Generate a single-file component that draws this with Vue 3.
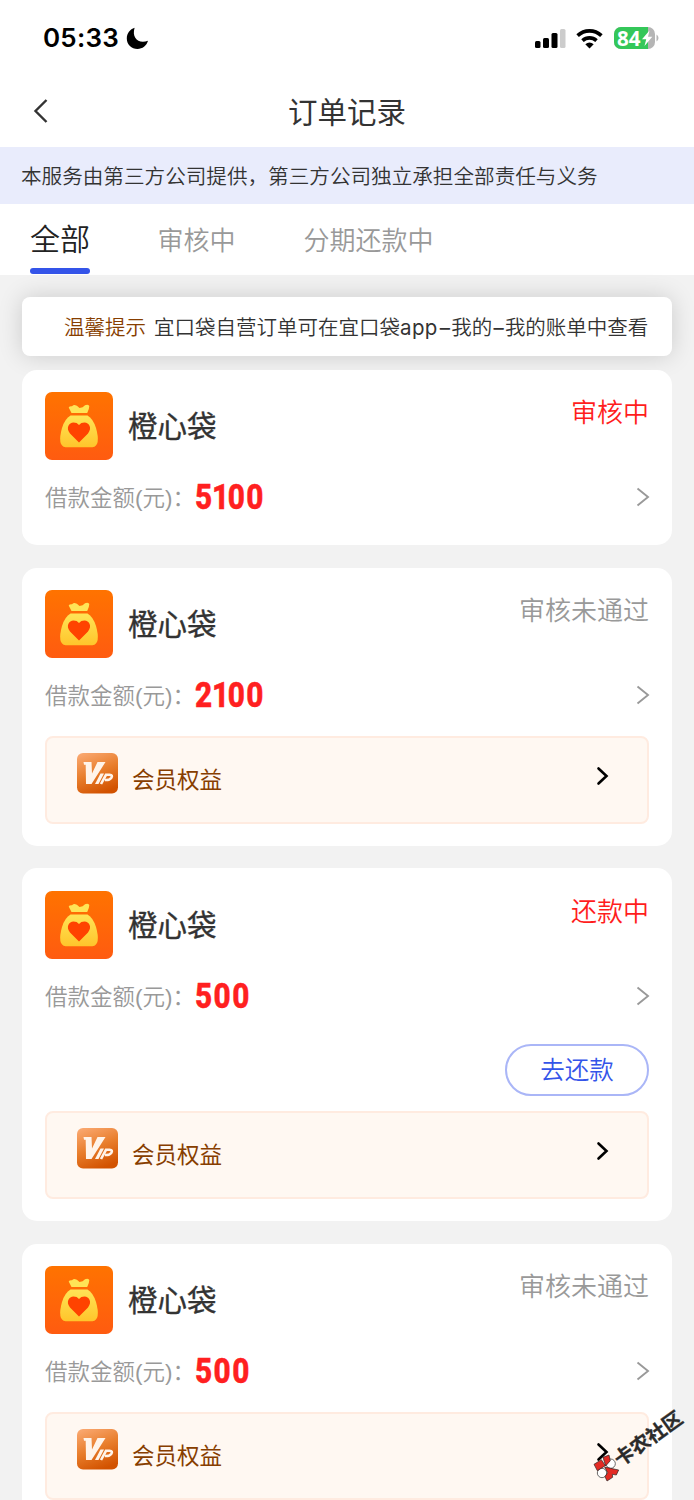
<script setup>
const orders = [
  { amount: '5100', status: '审核中', active: true },
  { amount: '2100', status: '审核未通过', vip: true },
  { amount: '500', status: '还款中', active: true, repay: true, vip: true },
  { amount: '500', status: '审核未通过', vip: true },
]
</script>

<template>
  <div class="page">
    <header class="statusbar">
      <span class="time">05:33</span>
      <svg class="moon" width="23" height="23" viewBox="0 0 23 23"><path d="M8.600.8C5.500 11 12.500 17.300 22 13.800C20.500 18.800 16.500 22 11.500 22C5.500 22 .8 17.500.8 11.500C.8 6.500 4 2.200 8.600.8Z" /></svg>
      <div class="icons">
        <svg width="32" height="21" viewBox="0 0 32 21">
          <rect x="1" y="13" width="5.500" height="7" rx="1.500" /><rect x="9" y="10" width="6" height="10" rx="1.500" />
          <rect x="17.500" y="5" width="6" height="15" rx="1.500" /><rect x="26" y="1" width="5.500" height="19" rx="1.500" fill="#ccc" />
        </svg>
        <svg class="wifi" width="27" height="21" viewBox="0 0 27 21" fill="none" stroke="#000" stroke-width="3.700">
          <path d="M1.600 7.600C8.400 1.300 18.600 1.300 25.400 7.600" /><path d="M6.500 12.700C10.600 9 16.400 9 20.500 12.700" />
          <path d="M9.300 16.300Q13.500 12.500 17.700 16.300L13.500 20.500Z" fill="#000" stroke="none" />
        </svg>
        <div class="battery">
          <svg width="45" height="22" viewBox="0 0 45 22">
            <defs><clipPath id="battery"><rect width="41" height="22" rx="7" /></clipPath></defs>
            <g clip-path="url(#battery)"><rect width="41" height="22" fill="#b5b5b5" /><rect width="34" height="22" fill="#34c759" /></g>
            <path d="M42.500 7.500Q44.500 8.500 44.500 11T42.500 14.500Z" fill="#b5b5b5" />
            <path d="M35.500 3.500L28 12.200H32.200L30.500 19L38.300 9.800H34Z" fill="#fff" />
          </svg>
          <span class="level">84</span>
        </div>
      </div>
    </header>

    <nav class="navbar">
      <svg class="back" width="16" height="26" viewBox="0 0 16 26"><path d="M13.500 2L2.500 13L13.500 24" fill="none" stroke="#333" stroke-width="2.400" /></svg>
      <h1>订单记录</h1>
    </nav>
    <div class="notice">本服务由第三方公司提供，第三方公司独立承担全部责任与义务</div>
    <div class="tabs">
      <span class="tab current">全部</span><span class="tab">审核中</span><span class="tab">分期还款中</span>
    </div>

    <main>
      <div class="tip"><b>温馨提示</b><span>宜口袋自营订单可在宜口袋<i>app</i><i class="dash">–</i>我的<i class="dash">–</i>我的账单中查看</span></div>
      <section v-for="(o, i) in orders" :key="i" class="card" :class="{ plain: !o.vip }">
        <div class="head">
          <svg class="logo" width="68" height="68" viewBox="0 0 68 68">
            <defs>
              <linearGradient id="orange" x2="0" y2="1"><stop stop-color="#ff7300" /><stop offset="1" stop-color="#ff5b10" /></linearGradient>
              <linearGradient id="gold" x2="0" y2="1"><stop stop-color="#ffe456" /><stop offset="1" stop-color="#ffc52b" /></linearGradient>
            </defs>
            <rect width="68" height="68" rx="7" fill="url(#orange)" />
            <path d="M26.500 21L23.700 15.500Q24.500 14 27 14.300Q30 11 34.500 16Q38 15.700 40 13.200Q43 12 44.300 14Q44.300 17 42.200 21Z" fill="#ffe456" />
            <path d="M25.500 23.500H42.500Q48 26.500 51 36Q56 54 47.500 55.300H20.500Q12 54 17 36Q20 26.500 25.500 23.500Z" fill="url(#gold)" />
            <path d="M34 50.500L25 41.500C20.500 36 24 30.600 28.500 30.600Q32 30.600 34 33Q36 30.600 39.500 30.600C44 30.600 47.500 36 43 41.500Z" fill="#ff4300" />
          </svg>
          <h2>橙心袋</h2>
          <span class="status" :class="{ red: o.active }">{{ o.status }}</span>
        </div>
        <div class="sum">
          <span class="label">借款金额(元)：</span>
          <strong><span v-for="(d, n) in o.amount" :key="n" :class="{ one: d === '1' }">{{ d }}</span></strong>
          <svg class="more" width="14" height="22" viewBox="0 0 14 22"><path d="M1.500 2.500L12 11L1.500 19.500" fill="none" stroke="#999" stroke-width="1.900" /></svg>
        </div>
        <button v-if="o.repay" class="repay">去还款</button>
        <div v-if="o.vip" class="vip">
          <svg class="badge" width="41" height="41" viewBox="0 0 41 41">
            <defs><linearGradient id="copper" x1=".2" x2=".6" y2="1"><stop stop-color="#f9a66d" /><stop offset=".5" stop-color="#e87d2b" /><stop offset="1" stop-color="#d25200" /></linearGradient></defs>
            <rect width="41" height="40.500" rx="6" fill="url(#copper)" />
            <g fill="#fff4ea"><path d="M6.500 9H14.500L15 20.500L20.500 9H28.500L14.500 31H9L8.700 11.800H7Z" /><path d="M23.500 20.500H27L21.500 31H18Z" /></g>
            <path d="M24 31L29 21.800H32.500Q36.200 22 34.200 25Q32.500 27.300 28 27" fill="none" stroke="#fff4ea" stroke-width="2.600" />
          </svg>
          <span>会员权益</span>
          <svg class="go" width="14" height="22" viewBox="0 0 14 22"><path d="M2.500 3.500L10.500 11L2.500 18.500" fill="none" stroke="#000" stroke-width="2.600" stroke-linecap="round" /></svg>
        </div>
      </section>
    </main>

    <svg class="mark" width="124" height="110" viewBox="0 0 372 330">
      <g stroke="#222" stroke-width="2">
        <circle cx="122" cy="221" r="14" fill="#fff" /><circle cx="96" cy="249" r="14" fill="#fff" />
        <path d="M72 223L94 209L106 227L82 242Z" fill="#e32b24" /><path d="M99 202L117 195L121 212L107 228Z" fill="#e32b24" />
        <path d="M104 231L122 235L146 240L139 255L127 253L128 262L111 273L105 260L113 248Z" fill="#e32b24" />
      </g>
      <text transform="translate(151 231) rotate(-35.500)" textLength="236" lengthAdjust="spacingAndGlyphs">卡农社区</text>
    </svg>
  </div>
</template>

<style>
body { margin: 0; }
</style>

<style scoped>
.page { position: relative; width: 694px; height: 1500px; overflow: hidden; background: #f2f2f2; color: #333; font-family: "Liberation Sans", "Noto Sans CJK SC", sans-serif; font-weight: 350; }
svg { display: block; flex: none; }
h1, h2 { margin: 0; font-weight: 400; }
.statusbar { display: flex; align-items: center; height: 73px; padding: 3px 36px 0 43px; box-sizing: border-box; background: #fff; }
.time { width: 76px; font: 600 26px/30px Inter, sans-serif; color: #000; letter-spacing: .2px; white-space: nowrap; }
.moon { margin-left: 6.500px; }
.icons { display: flex; align-items: center; margin-left: auto; margin-right: -1px; }
.wifi { margin-left: 10px; }
.battery { position: relative; margin-left: 11px; }
.level { position: absolute; left: 3px; top: -3px; font: 700 20.500px/28px "Open Sans", sans-serif; color: #fff; }
.navbar { display: grid; grid-template-columns: 60px 1fr 60px; align-items: center; height: 74px; background: #fff; }
.back { margin-left: 33px; margin-top: 1px; }
h1 { margin-top: -1px; text-align: center; font-size: 29.500px; line-height: 40px; font-family: "Noto Sans CJK SC", sans-serif; }
.notice { height: 55px; padding: 2px 0 0 21px; background: #e9ecfc; font-size: 20.600px; line-height: 55px; white-space: nowrap; }
.tabs { display: flex; height: 71px; padding-left: 30px; background: #fff; }
.tab { height: 71px; line-height: 75px; margin-right: 68px; font-size: 26px; color: #999; }
.current { position: relative; margin-right: 67.500px; font-size: 30px; line-height: 71px; color: #222; }
.current::after { content: ""; position: absolute; left: 0; bottom: 1px; width: 60px; height: 6px; border-radius: 3px; background: #3454e9; }
main { padding: 22px 22px 0; }
.tip { display: flex; align-items: center; height: 59px; margin-bottom: 14px; padding: 0 0 1px 42px; box-sizing: border-box; border-radius: 8px; background: #fff; box-shadow: 0 0 24px rgba(0, 0, 0, .16); font-size: 20.500px; white-space: nowrap; }
.tip b { width: 90px; color: #873e00; font-weight: 350; }
.tip i { display: inline-block; width: 38.500px; font: 400 20.500px/24px Inter, sans-serif; letter-spacing: .4px; }
.tip .dash { width: 12.700px; text-align: center; letter-spacing: 0; }
.card { margin-bottom: 22.700px; padding: 22.300px 23px 21.700px; border-radius: 15px; background: #fff; }
.plain { padding-bottom: 10.700px; }
.head { display: flex; height: 68px; }
h2 { margin-left: 15px; font-size: 29.500px; line-height: 69px; -webkit-text-stroke: .35px #333; }
.status { margin-left: auto; font-size: 26px; line-height: 42px; color: #999; }
.status.red { color: #ff1d1d; }
.sum { display: flex; align-items: center; height: 74px; }
.label { width: 150px; margin-top: -2px; font-size: 22.500px; color: #999; white-space: nowrap; }
strong { display: flex; margin-top: 2px; font: 800 35px/40px Roboto, sans-serif; color: #ff2020; letter-spacing: 1.700px; transform: scaleX(.85); transform-origin: 0 50%; -webkit-text-stroke: .5px #ff2020; }
.one { margin: 0 -3.300px 0 -2px; }
.more { margin-left: auto; margin-right: -1px; }
.repay { display: block; width: 144px; height: 52px; margin: 11px 0 15px auto; padding: 0 0 2px; border: 2px solid #aab6f7; border-radius: 26px; background: #fff; color: #3454e9; font: 350 24.500px/44px "Noto Sans CJK SC", sans-serif; }
.vip { display: flex; align-items: center; height: 88px; margin-top: 4px; padding: 0 37px 0 29.500px; box-sizing: border-box; border: 2px solid #ffebe0; border-radius: 8px; background: #fff8f2; color: #873e00; font-size: 22.500px; font-weight: 400; }
.repay + .vip { margin: 0 0 1px; }
.badge { margin-top: -13px; }
.vip span { margin: -4px 0 0 14.500px; }
.go { margin: -8px 0 0 auto; }
.mark { position: absolute; left: 570px; top: 1390px; }
.mark text { font: 700 58px "Noto Sans CJK SC", sans-serif; fill: #2b2b2b; stroke: #2b2b2b; stroke-width: 1px; }
</style>
